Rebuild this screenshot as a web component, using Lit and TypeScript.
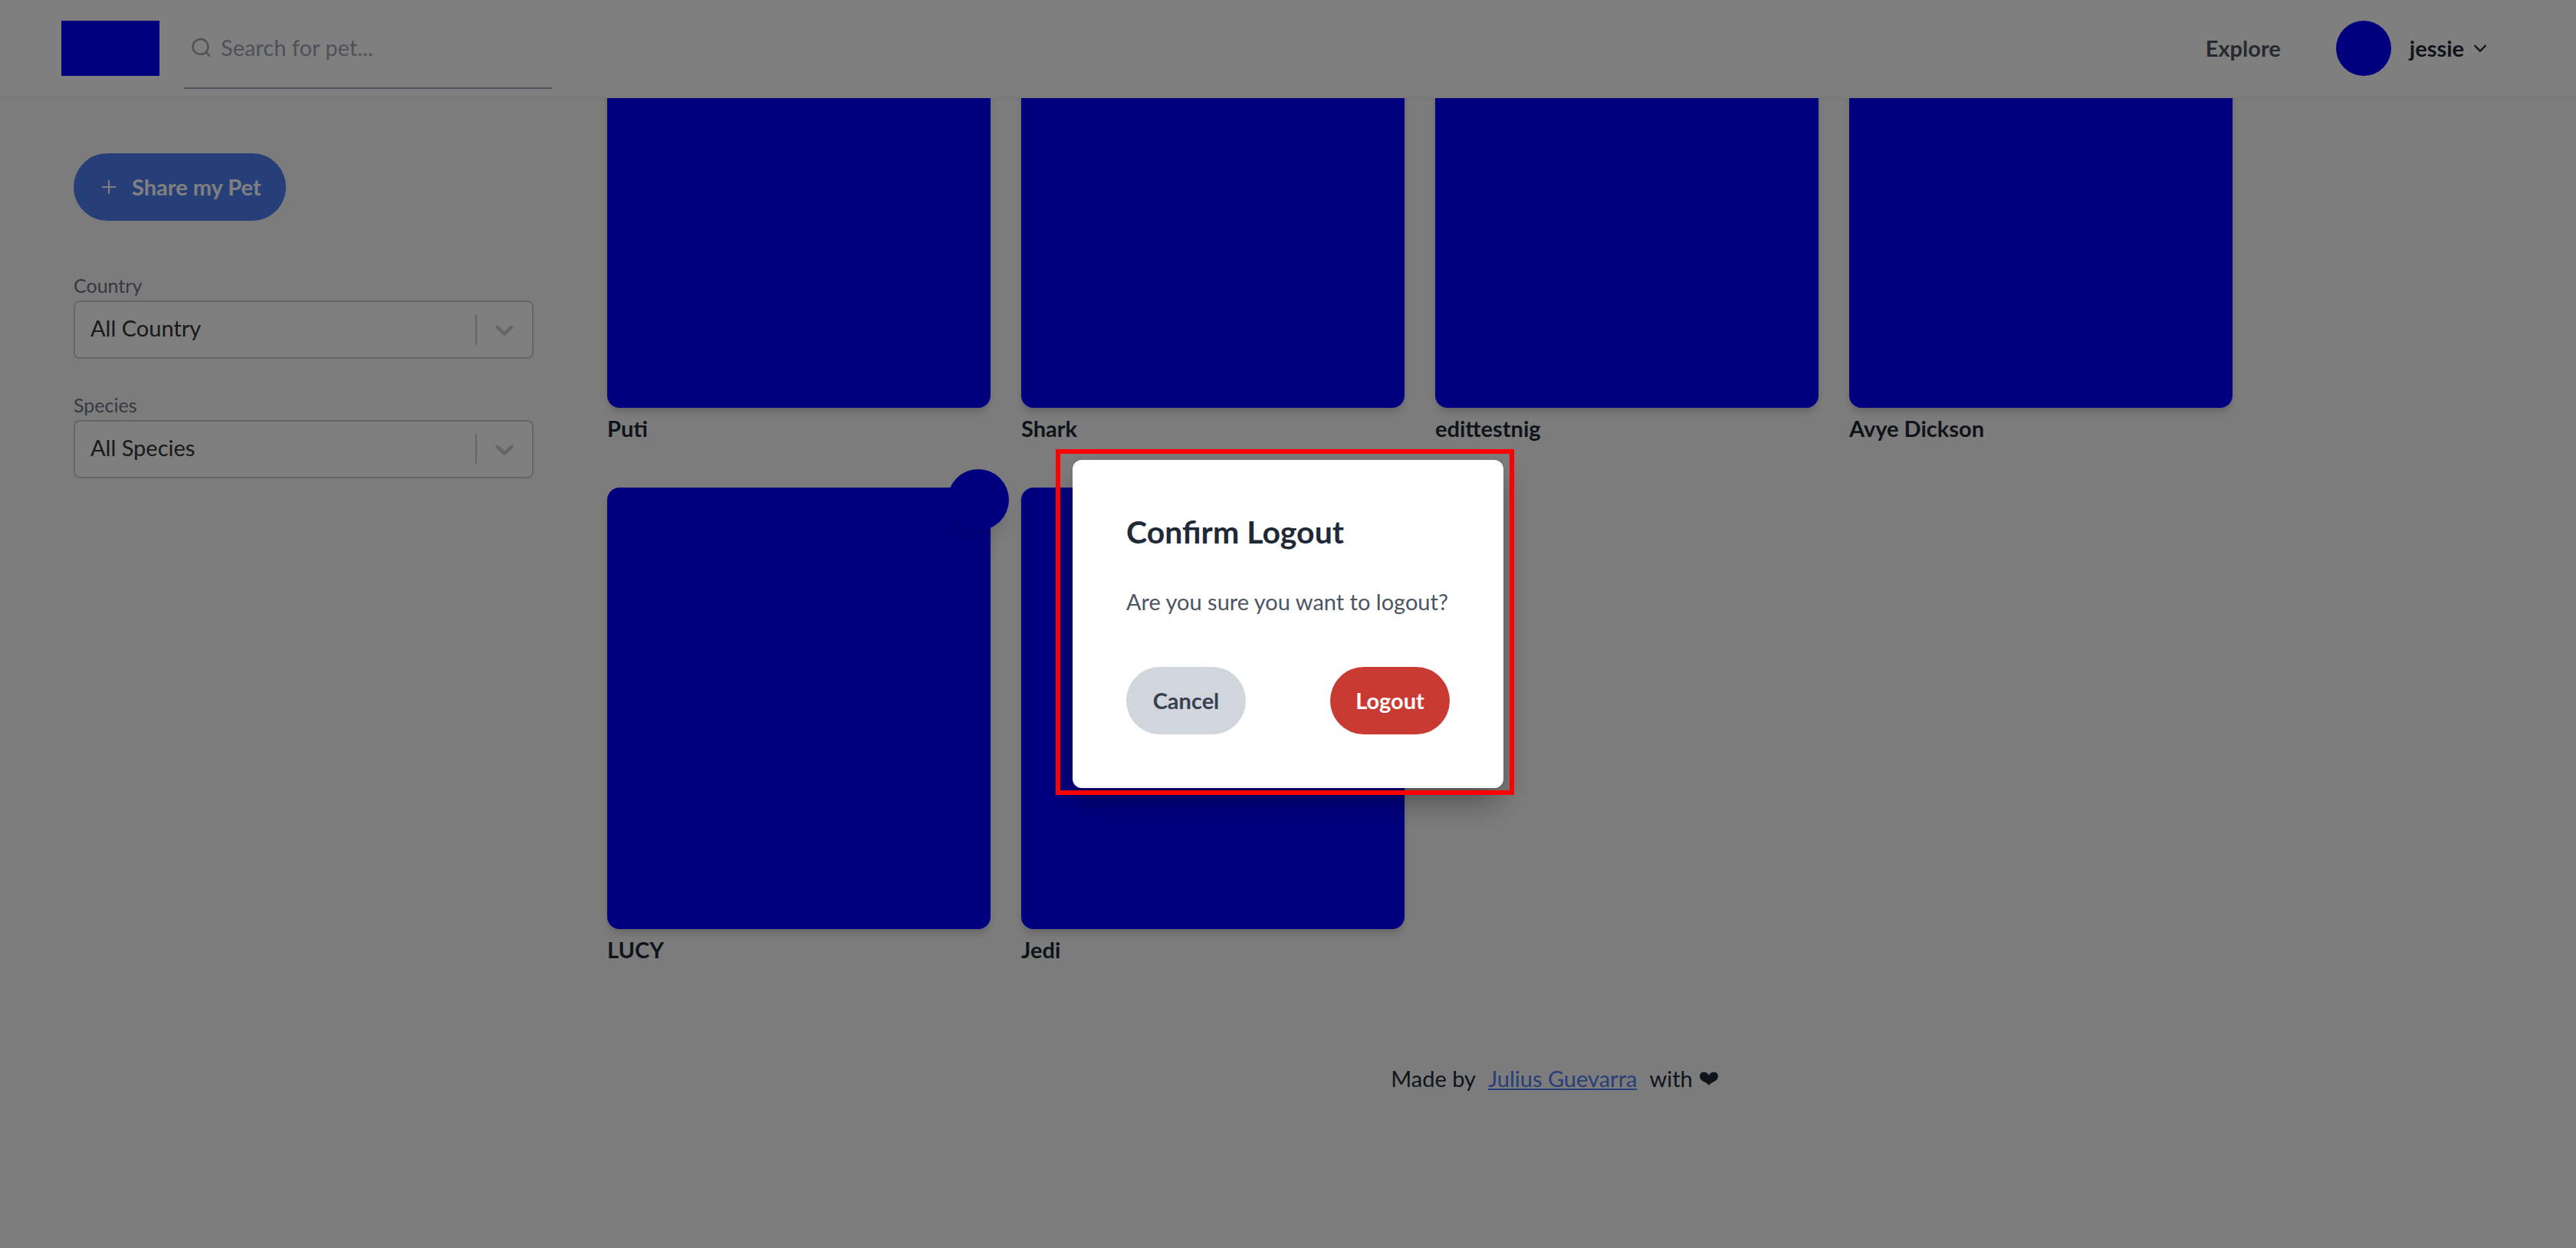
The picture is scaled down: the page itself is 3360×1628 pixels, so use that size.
import { LitElement, html, css, svg } from "lit";
import { customElement, property, state } from "lit/decorators.js";

interface Pet {
  name: string;
  badge?: boolean;
}

const PETS: Pet[] = [
  { name: "Puti" },
  { name: "Shark" },
  { name: "edittestnig" },
  { name: "Avye Dickson" },
  { name: "LUCY", badge: true },
  { name: "Jedi" },
];

const searchIcon = svg`<circle cx="11.500" cy="12" r="10"/><path d="M18.500 19l5.500 5.500"/>`;

/** Drop-down with a label above it. */
@customElement("filter-select")
class FilterSelect extends LitElement {
  @property() label = "";
  @property({ type: Array }) options: string[] = [];

  static styles = css`
    :host {
      display: block;
    }
    .field {
      display: flex;
      flex-direction: column;
      gap: 4px;
    }
    .label {
      font-size: 25px;
      line-height: 32px;
      color: #6b7280;
    }
    .box {
      display: grid;
      grid-template-columns: 1fr auto;
      align-items: center;
      box-sizing: border-box;
      height: 76px;
      border: 2px solid #ccc;
      border-radius: 8px;
      background: #fff;
    }
    .select {
      grid-area: 1 / 1 / 2 / 3;
      height: 100%;
      padding: 0 90px 4px 20px;
      border: 0;
      background: none;
      appearance: none;
      font: inherit;
      color: #333;
    }
    .indicator {
      grid-area: 1 / 2 / 2 / 3;
      display: flex;
      padding: 0 16px;
      border-left: 2px solid #ccc;
      pointer-events: none;
    }
    .chevron {
      width: 40px;
      height: 40px;
      fill: #ccc;
    }
  `;

  render() {
    return html`
      <div class="field">
        <label class="label" for="choice">${this.label}</label>
        <div class="box">
          <select class="select" id="choice">
            ${this.options.map((o) => html`<option>${o}</option>`)}
          </select>
          <span class="indicator">
            <svg class="chevron" viewBox="0 0 20 20" aria-hidden="true">
              <path
                d="M4.516 7.548c0.436-0.446 1.043-0.481 1.576 0l3.908 3.747 3.908-3.747c0.533-0.481 1.141-0.446 1.574 0 0.436 0.445 0.408 1.197 0 1.615-0.406 0.418-4.695 4.502-4.695 4.502-0.217 0.223-0.502 0.335-0.787 0.335s-0.57-0.112-0.789-0.335c0 0-4.287-4.084-4.695-4.502s-0.436-1.17 0-1.615z"
              />
            </svg>
          </span>
        </div>
      </div>
    `;
  }
}

@customElement("pet-card")
class PetCard extends LitElement {
  @property() name = "";
  @property({ type: Boolean }) badge = false;

  static styles = css`
    :host {
      display: block;
    }
    .photo {
      position: relative;
      height: 576px;
      border-radius: 16px;
      background: #00f;
      box-shadow: 0 8px 12px -2px rgba(0, 0, 0, 0.14), 0 4px 8px -2px rgba(0, 0, 0, 0.08);
    }
    .badge {
      position: absolute;
      top: -24px;
      right: -24px;
      width: 80px;
      height: 80px;
      border-radius: 50%;
      background: #00f;
      box-shadow: 0 20px 30px -6px rgba(0, 0, 0, 0.1), 0 8px 12px -4px rgba(0, 0, 0, 0.06);
    }
    .name {
      margin: 6px 0 0;
      font-size: 29px;
      line-height: 42px;
      font-weight: 700;
      color: #1f2937;
    }
  `;

  render() {
    return html`
      <article>
        <div class="photo">${this.badge ? html`<span class="badge"></span>` : ""}</div>
        <h2 class="name">${this.name}</h2>
      </article>
    `;
  }
}

@customElement("app-root")
class AppRoot extends LitElement {
  @state() private confirming = true;

  static styles = css`
    :host {
      display: block;
      font: 29px/42px Lato, "Liberation Sans", sans-serif;
      color: #1f2937;
    }
    .page {
      position: relative;
      display: flex;
      flex-direction: column;
      height: 100vh;
      overflow: hidden;
      background: #f9f9f9;
    }
    button {
      font: inherit;
      cursor: pointer;
    }

    .header {
      z-index: 1;
      display: flex;
      align-items: center;
      gap: 32px;
      height: 126px;
      flex-shrink: 0;
      padding: 0 116px 0 80px;
      border-bottom: 2px solid #f4f4f4;
      background: #fff;
      box-shadow: 0 1px 3px rgba(0, 0, 0, 0.04);
    }
    .logo {
      width: 128px;
      height: 72px;
      background: #00f;
    }
    .search {
      display: flex;
      align-items: center;
      gap: 12px;
      box-sizing: border-box;
      width: 480px;
      height: 106px;
      padding: 0 10px;
      border-bottom: 2px solid #a3a5b0;
    }
    .search-icon {
      width: 26px;
      height: 26px;
      flex-shrink: 0;
      fill: none;
      stroke: #9ca3af;
      stroke-width: 2.4;
    }
    .search-input {
      flex: 1;
      min-width: 0;
      padding: 0;
      border: 0;
      outline: 0;
      background: none;
      font: inherit;
    }
    .search-input::placeholder {
      color: #9ca3af;
      opacity: 1;
    }
    .nav {
      display: flex;
      align-items: center;
      gap: 72px;
      margin-left: auto;
    }
    .nav-link {
      font-weight: 700;
      color: #4b5563;
      text-decoration: none;
    }
    .user {
      display: flex;
      align-items: center;
      padding: 0;
      border: 0;
      background: none;
      font-weight: 700;
      color: #1f2937;
    }
    .avatar {
      width: 72px;
      height: 72px;
      margin-right: 24px;
      border-radius: 50%;
      background: #00f;
    }
    .user-chevron {
      width: 18px;
      height: 12px;
      margin-left: 12px;
      fill: none;
      stroke: #1f2937;
      stroke-width: 2.4;
    }

    .body {
      display: flex;
      flex: 1;
      min-height: 0;
    }
    .sidebar {
      box-sizing: border-box;
      width: 696px;
      flex-shrink: 0;
      padding: 72px 0 0 96px;
    }
    .share {
      display: flex;
      align-items: center;
      gap: 20px;
      height: 88px;
      margin-bottom: 68px;
      padding: 0 32px 0 36px;
      border: 0;
      border-radius: 44px;
      background: #4e7ef0;
      font-weight: 700;
      color: #fff;
    }
    .plus {
      width: 20px;
      height: 20px;
      stroke: #fff;
      stroke-width: 2;
    }
    .filters {
      display: flex;
      flex-direction: column;
      gap: 44px;
    }

    .main {
      flex: 1;
      min-width: 0;
    }
    /* The list is scrolled, so its first row runs under the header. */
    .pets {
      display: grid;
      grid-template-columns: repeat(auto-fill, 500px);
      gap: 56px 40px;
      margin-top: -172px;
      padding: 0 96px;
    }
    .footer {
      display: flex;
      justify-content: center;
      align-items: center;
      gap: 16px;
      margin-top: 126px;
    }
    .author {
      color: #4e7ef0;
      text-decoration: underline;
    }
    .closing {
      display: flex;
      align-items: center;
      gap: 8px;
    }
    .heart {
      width: 26px;
      height: 20px;
      fill: #1f2937;
    }

    .overlay {
      position: absolute;
      inset: 0;
      z-index: 2;
      display: grid;
      place-items: center;
      background: rgba(0, 0, 0, 0.5);
    }
    .modal {
      position: relative;
      box-sizing: border-box;
      min-width: 562px;
      padding: 70px;
      border-radius: 12px;
      background: #fff;
      box-shadow: 0 20px 40px -6px rgba(0, 0, 0, 0.4);
    }
    .highlight {
      position: absolute;
      inset: -14px -14px -9px -22px;
      border: 6px solid #f00;
      pointer-events: none;
    }
    .title {
      margin: 0 0 46px;
      font-size: 41px;
      line-height: 48px;
      font-weight: 700;
    }
    .question {
      margin: 0 0 64px;
      color: #4b5563;
    }
    .actions {
      display: flex;
      justify-content: space-between;
    }
    .action {
      min-width: 156px;
      height: 88px;
      padding: 0 32px;
      border: 0;
      border-radius: 44px;
      font-weight: 700;
    }
    .cancel {
      background: #d1d5dc;
      color: #374151;
    }
    .logout {
      background: #c93a33;
      color: #fff;
    }
  `;

  private close() {
    this.confirming = false;
  }

  private renderModal() {
    return html`
      <div class="overlay">
        <div class="modal" role="dialog" aria-modal="true" aria-labelledby="title">
          <h1 class="title" id="title">Confirm Logout</h1>
          <p class="question">Are you sure you want to logout?</p>
          <div class="actions">
            <button class="action cancel" @click=${this.close}>Cancel</button>
            <button class="action logout" @click=${this.close}>Logout</button>
          </div>
          <span class="highlight"></span>
        </div>
      </div>
    `;
  }

  render() {
    return html`
      <div class="page">
        <header class="header">
          <div class="logo"></div>
          <div class="search">
            <svg class="search-icon" viewBox="0 0 26 26" aria-hidden="true">${searchIcon}</svg>
            <input class="search-input" type="text" placeholder="Search for pet..." aria-label="Search for pet" />
          </div>
          <nav class="nav">
            <a class="nav-link" href="#explore">Explore</a>
            <button class="user">
              <span class="avatar"></span>
              jessie
              <svg class="user-chevron" viewBox="0 0 18 12" aria-hidden="true">
                <path d="M1.5 2l7.5 7.5L16.500 2" />
              </svg>
            </button>
          </nav>
        </header>
        <div class="body">
          <aside class="sidebar">
            <button class="share">
              <svg class="plus" viewBox="0 0 20 20" aria-hidden="true"><path d="M10 1v18M1 10h18" /></svg>
              Share my Pet
            </button>
            <div class="filters">
              <filter-select label="Country" .options=${["All Country"]}></filter-select>
              <filter-select label="Species" .options=${["All Species"]}></filter-select>
            </div>
          </aside>
          <main class="main">
            <div class="pets">
              ${PETS.map((p) => html`<pet-card .name=${p.name} ?badge=${p.badge}></pet-card>`)}
            </div>
            <footer class="footer">
              <span>Made by</span>
              <a class="author" href="#author">Julius Guevarra</a>
              <span class="closing">
                with
                <svg class="heart" viewBox="0 0 26 20" role="img" aria-label="love">
                  <path
                    d="M13 19C11 14.500 1 14 1 7C1 3.500 3.500 1.500 6.500 1.500C9.500 1.500 12 3 13 6C14 3 16.500 1.500 19.500 1.500C22.500 1.500 25 3.500 25 7C25 14 15 14.500 13 19z"
                  />
                </svg>
              </span>
            </footer>
          </main>
        </div>
        ${this.confirming ? this.renderModal() : ""}
      </div>
    `;
  }
}
